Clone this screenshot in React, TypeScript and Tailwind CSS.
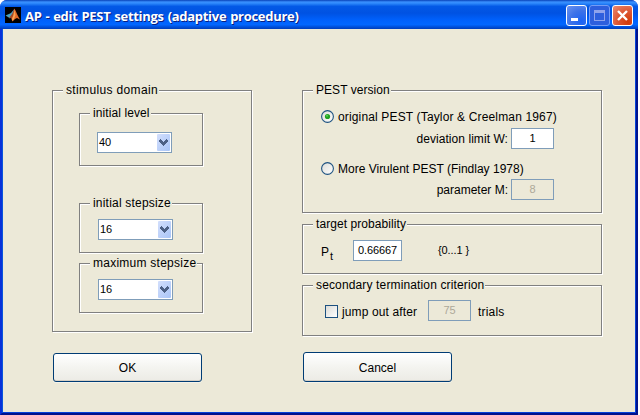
import type { ReactNode } from 'react';

type GroupProps = { title: string; className: string; tracking?: string; children: ReactNode };

// Etched frame whose caption interrupts the top edge.
function Group({ title, className, tracking = '', children }: GroupProps) {
  return (
    <section
      className={`flex flex-col items-start border border-[#808080] [box-shadow:1px_1px_0_#fff,inset_1px_1px_0_#fff] ${className}`}
    >
      <h2 className={`-mt-2 ml-2.5 h-3.5 whitespace-nowrap bg-[#ece9d8] pl-[3px] pr-px ${tracking}`}>{title}</h2>
      {children}
    </section>
  );
}

function Combo({ value, className }: { value: string; className: string }) {
  return (
    <div
      className={`flex h-[21px] w-[75px] items-center justify-between border border-[#7f9db9] bg-white pl-px pr-px text-[11px] ${className}`}
    >
      <span className="leading-[19px]">{value}</span>
      <span className="flex h-[17px] w-[13px] items-center justify-center rounded-[1px] bg-linear-to-br from-[#d3dffc] to-[#a9c5f7]">
        <svg width="9" height="7" viewBox="0 0 9 7" shapeRendering="crispEdges" fill="#4d6185">
          <path d="M1 0h1v1h1v1h1v1h1V2h1V1h1V0h1v1h1v2H8v1H7v1H6v1H5v1H4V6H3V5H2V4H1V3H0V1h1z" />
        </svg>
      </span>
    </div>
  );
}

function Field({ value, className, disabled = false }: { value: string; className: string; disabled?: boolean }) {
  return (
    <div
      className={`flex h-[21px] shrink-0 justify-center border border-[#7f9db9] text-[11px] leading-[19px] ${
        disabled ? 'text-[#aca899]' : 'bg-white'
      } ${className}`}
    >
      {value}
    </div>
  );
}

function Radio({ checked = false }: { checked?: boolean }) {
  return (
    <svg className="mr-1 shrink-0" width="13" height="13" viewBox="0 0 13 13">
      <defs>
        <linearGradient id="well" x1="0" y1="0" x2="1" y2="1">
          <stop offset="0" stopColor="#dcdcd7" />
          <stop offset="1" stopColor="#fff" />
        </linearGradient>
      </defs>
      <circle cx="6.5" cy="6.5" r="5.9" fill="url(#well)" stroke="#1d5281" strokeWidth="1.1" />
      {checked && <circle cx="6.5" cy="6.5" r="2.6" fill="#21a121" />}
      {checked && <circle cx="6" cy="5.8" r="1" fill="#55d551" />}
    </svg>
  );
}

function TitleBar() {
  return (
    <header className="flex h-[29px] shrink-0 items-start rounded-t-[7px] bg-[linear-gradient(180deg,#0842b8_0%,#3a91ff_7%,#2b86fa_12%,#0359e6_22%,#0052e2_45%,#0060fb_68%,#0267ff_85%,#0052de_92%,#003dba_100%)] pl-[5px] pr-[5px]">
      <svg className="mt-[7px]" width="16" height="16" viewBox="0 0 16 16">
        <rect width="16" height="16" fill="#000" />
        <path d="M0.500 8.500L4 7l2-1 3-3.500-1 5-3 4-2-1.500z" fill="#4ba3c0" />
        <path d="M4 11l3-4 2.500-5L10 8l-2.500 5L6 11z" fill="#a34a28" />
        <path d="M9 1.500c2 1.500 3 6.500 6 11L12 11l-2 1-2.500 2.500L6.500 12l2-4z" fill="#e06a28" />
        <path d="M9.300 3l1.200 5-1.500 4-1.500 2L7 12l1.500-4z" fill="#f9a250" />
      </svg>
      <h1 className="ml-1 mt-[7px] whitespace-nowrap font-['Open_Sans','Noto_Sans',sans-serif] text-[13px] font-bold leading-[18px] tracking-[-0.29px] text-white [text-shadow:1px_1px_0_#0a1f80] [word-spacing:0.8px]">
        AP - edit PEST settings (adaptive procedure)
      </h1>
      <div className="ml-auto mt-[5px] flex gap-0.5">
        <span className="flex h-[21px] w-[21px] rounded-[3px] border border-white bg-[radial-gradient(circle_at_75%_80%,#1b63f5,#3d72e8_50%,#6c94f0)]">
          <svg width="19" height="19" shapeRendering="crispEdges">
            <path d="M4 12h7v3H4z" fill="#fff" />
          </svg>
        </span>
        <span className="flex h-[21px] w-[21px] rounded-[3px] border border-[#759cf5] bg-[#2e5fdd]">
          <svg width="19" height="19" shapeRendering="crispEdges">
            <path d="M4 4h11v11H4zM5 7v7h9V7z" fill="#8fa3ec" fillRule="evenodd" />
          </svg>
        </span>
        <span className="flex h-[21px] w-[21px] rounded-[3px] border border-white bg-[radial-gradient(circle_at_80%_85%,#d23a08,#dd5835_50%,#ec8b73)]">
          <svg width="19" height="19">
            <path d="M5 5l9 9M14 5l-9 9" stroke="#fff" strokeWidth="2.400" />
          </svg>
        </span>
      </div>
    </header>
  );
}

function PushButton({ label, className }: { label: string; className: string }) {
  return (
    <button
      className={`flex w-[149px] justify-center rounded-[3px] border border-[#003c74] bg-linear-to-b from-white via-[#f4f4f0] to-[#ecebe5] [box-shadow:inset_0_-1px_0_#d6d0c5,0_1px_0_#f5f3ea] ${className}`}
    >
      {label}
    </button>
  );
}

export default function App() {
  return (
    <div className="h-[415px] w-[640px] overflow-hidden bg-white font-['Liberation_Sans',Arial,sans-serif] text-[12px] leading-[14px] text-black">
      <div className="flex h-full w-[638px] flex-col rounded-t-[7px] bg-[#0831d9]">
        <TitleBar />
        <div className="flex min-h-0 flex-1 border-x-2 border-b-2 border-b-[#00138c] border-l-[#0831d9] border-r-[#00138c]">
          <main className="flex min-h-0 flex-1 border-x border-b border-b-[#0441d8] border-l-[#0855dd] border-r-[#0441d8] bg-[#ece9d8] pl-[49px] pt-[61px]">
            <div className="w-[250px]">
              <Group title="stimulus domain" className="h-[242px] w-[200px]" tracking="tracking-[0.35px]">
                <Group title="initial level" className="ml-[26px] mt-4 h-[53px] w-[124px]" tracking="tracking-[0.09px]">
                  <Combo value="40" className="ml-[17px] mt-3" />
                </Group>
                <Group title="initial stepsize" className="ml-[26px] mt-[37px] h-[50px] w-[124px]" tracking="tracking-[0.2px]">
                  <Combo value="16" className="ml-[18px] mt-[9px]" />
                </Group>
                <Group title="maximum stepsize" className="ml-[26px] mt-2.5 h-[50px] w-[124px]" tracking="tracking-[0.25px]">
                  <Combo value="16" className="ml-[18px] mt-[9px]" />
                </Group>
              </Group>
              <PushButton label="OK" className="ml-px mt-[21px] h-[29px] pt-[7px]" />
            </div>
            <div className="w-[300px]">
              <Group title="PEST version" className="h-[123px] w-[300px]" tracking="tracking-[0.05px]">
                <div className="ml-[18px] mt-[13px] flex h-3.5 whitespace-nowrap">
                  <Radio checked />
                  <span className="tracking-[0.15px]">original PEST (Taylor &amp; Creelman 1967)</span>
                </div>
                <div className="mt-1 flex w-[251px] justify-end">
                  <span className="mr-[3px] mt-1 tracking-[0.06px]">deviation limit W:</span>
                  <Field value="1" className="w-[43px]" />
                </div>
                <div className="ml-[18px] mt-[13px] flex h-3.5 whitespace-nowrap">
                  <Radio />
                  <span>More Virulent PEST (Findlay 1978)</span>
                </div>
                <div className="mt-[3px] flex w-[251px] justify-end">
                  <span className="mr-[3px] mt-1">parameter M:</span>
                  <Field value="8" className="w-[43px]" disabled />
                </div>
              </Group>
              <Group title="target probability" className="mt-[11px] h-[50px] w-[300px]" tracking="tracking-[0.07px]">
                <div className="ml-[18px] mt-[9px] flex">
                  <span className="mt-[5px] w-[9px]">P</span>
                  <span className="mt-[9px] w-[23px] text-[11px]">t</span>
                  <Field value="0.66667" className="w-[49px] tracking-[-0.1px]" />
                  <span className="ml-9 mt-[3px] text-[11px] tracking-[-0.1px]">{'{0...1 }'}</span>
                </div>
              </Group>
              <Group title="secondary termination criterion" className="mt-[11px] h-[51px] w-[300px]" tracking="tracking-[0.14px]">
                <div className="ml-[22px] mt-2 flex">
                  <span className="mt-[5px] h-[13px] w-[13px] border border-[#1c5180] bg-linear-to-br from-[#dcdcd7] to-white" />
                  <span className="ml-1 mt-[5px] w-[86px] tracking-[0.12px]">jump out after</span>
                  <Field value="75" className="w-[43px]" disabled />
                  <span className="ml-[7px] mt-[5px] tracking-[0.2px]">trials</span>
                </div>
              </Group>
              <PushButton label="Cancel" className="ml-px mt-4 h-[30px] pt-2" />
            </div>
          </main>
        </div>
      </div>
    </div>
  );
}
